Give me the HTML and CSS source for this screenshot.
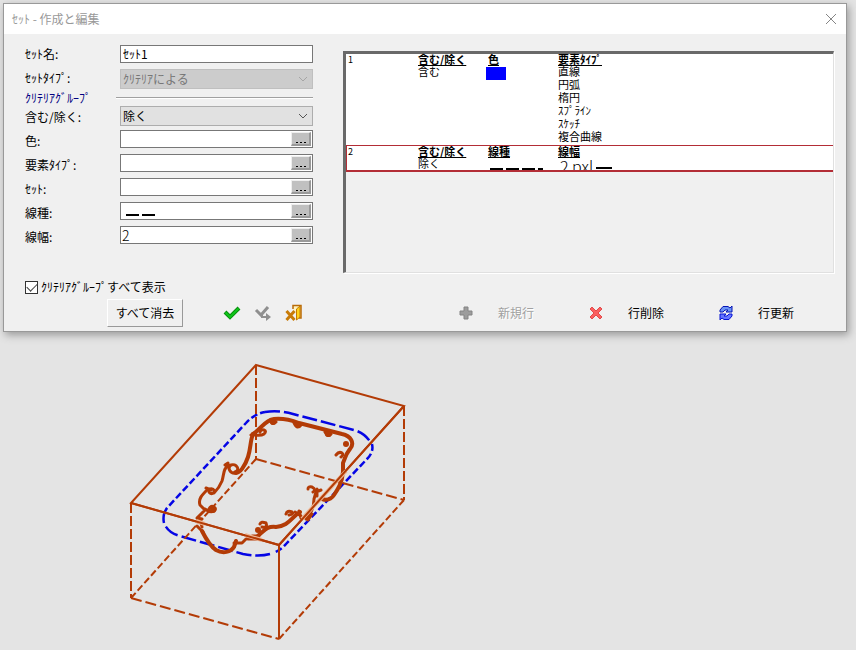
FILE: index.html
```html
<!DOCTYPE html>
<html lang="ja">
<head>
<meta charset="utf-8">
<title>ｾｯﾄ - 作成と編集</title>
<link rel="stylesheet" href="styles.css">
</head>
<body>
<section class="dialog">
  <header class="titlebar">
    <h1>ｾｯﾄ - 作成と編集</h1>
    <button class="close" aria-label="閉じる"><svg width="12" height="12" viewBox="0 0 12 12"><path d="M1 1L11 11M11 1L1 11" stroke="#858585" fill="none"/></svg></button>
  </header>
  <div class="content">
    <form class="criteria">
      <div class="row upper"><label for="name">ｾｯﾄ名:</label><div class="field"><input id="name" type="text" value="ｾｯﾄ1"></div></div>
      <div class="row upper"><label for="kind">ｾｯﾄﾀｲﾌﾟ:</label><div class="select disabled"><select id="kind" disabled><option>ｸﾘﾃﾘｱによる</option></select><svg width="10" height="6" viewBox="0 0 10 6"><path d="M1 1L5 5L9 1" stroke="#a5a5a5" fill="none"/></svg></div></div>
      <div class="group"><span>ｸﾘﾃﾘｱｸﾞﾙｰﾌﾟ</span><hr></div>
      <div class="row"><label for="mode">含む/除く:</label><div class="select"><select id="mode"><option>除く</option></select><svg width="10" height="6" viewBox="0 0 10 6"><path d="M1 1L5 5L9 1" stroke="#555" fill="none"/></svg></div></div>
      <div class="row"><label for="color">色:</label><div class="field"><input id="color" type="text"><button type="button" aria-label="色の選択"><i></i></button></div></div>
      <div class="row"><label for="element">要素ﾀｲﾌﾟ:</label><div class="field"><input id="element" type="text"><button type="button" aria-label="要素の選択"><i></i></button></div></div>
      <div class="row"><label for="set">ｾｯﾄ:</label><div class="field"><input id="set" type="text"><button type="button" aria-label="ｾｯﾄの選択"><i></i></button></div></div>
      <div class="row"><label for="style">線種:</label><div class="field"><svg class="dashes" width="36" height="16" viewBox="0 0 36 16"><path d="M5 12H18M21 12H34" stroke="#000" stroke-width="2"/></svg><input id="style" type="text"><button type="button" aria-label="線種の選択"><i></i></button></div></div>
      <div class="row"><label for="width">線幅:</label><div class="field"><input id="width" class="large" type="text" value="2"><button type="button" aria-label="線幅の選択"><i></i></button></div></div>
    </form>
    <div class="list">
      <table>
        <tbody>
          <tr>
            <td>1</td>
            <td><b>含む/除く</b><p>含む</p></td>
            <td><b>色</b><div class="swatch"></div></td>
            <td><b>要素ﾀｲﾌﾟ</b><p>直線</p><p>円弧</p><p>楕円</p><p>ｽﾌﾟﾗｲﾝ</p><p>ｽｹｯﾁ</p><p>複合曲線</p></td>
          </tr>
        </tbody>
      </table>
      <div class="selected">
        <table>
          <tbody>
            <tr>
              <td>2</td>
              <td><b>含む/除く</b><p>除く</p></td>
              <td><b>線種</b><svg width="60" height="13" viewBox="0 0 60 13"><path d="M2 12H15M18 12H31M34 12H47M50 12H55" stroke="#000" stroke-width="2"/></svg></td>
              <td><b>線幅</b><div class="pixels"><span>2 pxl</span><svg width="16" height="12" viewBox="0 0 16 12"><path d="M0 11H16" stroke="#000" stroke-width="2"/></svg></div></td>
            </tr>
          </tbody>
        </table>
      </div>
    </div>
  </div>
  <div class="show-all"><input id="all" type="checkbox" checked><label for="all">ｸﾘﾃﾘｱｸﾞﾙｰﾌﾟすべて表示</label></div>
  <footer>
    <div class="actions">
      <button class="clear">すべて消去</button>
      <button class="icon" aria-label="OK"><svg width="18" height="18" viewBox="0 0 18 18"><path d="M2 8L7 13L16 4" fill="none" stroke="#078f0b" stroke-width="4"/><path d="M2.500 8.500L7 13L15.500 4.500" fill="none" stroke="#10c51b" stroke-width="2"/></svg></button>
      <button class="icon" aria-label="適用"><svg width="18" height="18" viewBox="0 0 18 18"><path d="M2 6L7 11L14 3" fill="none" stroke="#8f8f8f" stroke-width="3"/><path d="M8 9V13H13" fill="none" stroke="#8f8f8f" stroke-width="2"/><path d="M12 9L17 13L12 17Z" fill="#8f8f8f"/></svg></button>
      <button class="icon" aria-label="終了"><svg width="18" height="18" viewBox="0 0 18 18"><path d="M8 5V1.500H16V14H14" fill="#fff3c0" stroke="#b96b08" stroke-width="1.500"/><path d="M11.500 5L15 2V13L11.500 16Z" fill="#ffd21a" stroke="#c57a00"/><path d="M1.500 7L9.500 16M9.500 7L1.500 16" stroke="#c87b08" stroke-width="3"/></svg></button>
    </div>
    <div class="line-tools">
      <button disabled><svg width="14" height="14" viewBox="0 0 14 14"><path d="M5 1H9V5H13V9H9V13H5V9H1V5H5Z" fill="#9c9c9c" stroke="#848484"/></svg><span>新規行</span></button>
      <button><svg width="14" height="14" viewBox="0 0 14 14"><path d="M3 1L7 5L11 1L13 3L9 7L13 11L11 13L7 9L3 13L1 11L5 7L1 3Z" fill="#fa6060" stroke="#e24b4b"/></svg><span>行削除</span></button>
      <button><svg width="14" height="16" viewBox="0 0 14 16"><path d="M1 7V5L4 1.500H9L11 3L13 1V7H7L9 5H6L4 7Z" fill="#6b94f5" stroke="#0714b4"/><path d="M13 9V11L10 14.500H5L3 13L1 15V9H7L5 11H8L10 9Z" fill="#6575ff" stroke="#0714d4"/></svg><span>行更新</span></button>
    </div>
  </footer>
</section>
<main class="viewport">
  <svg width="300" height="290" viewBox="120 355 300 290" role="img" aria-label="直方体と輪郭">
    <g class="offset">
      <path class="short" d="M164 514Q165 511 167 508L246 423Q254 414 265 412"/>
      <path d="M265 412Q279 410 293 414L354 430Q365 433 371 443"/>
      <path class="short" d="M372 444Q374 452 367 459L286 544Q281 550 273 553"/>
      <path d="M270 554Q259 557 243 554L180 536Q168 533 164 523Q163 519 164 514"/>
    </g>
    <g class="box">
      <path d="M256 365L404 406L279 545L131 503ZM279 545V639"/>
      <path class="hidden vertical" d="M256 365V459M404 406V500M131 503V598"/>
      <path class="hidden" d="M256 459L404 500M131 598L279 639"/>
      <path class="hidden short" d="M404 500L279 639M256 459L131 598"/>
    </g>
    <g class="contour">
      <path class="thick" d="M253 434C261 429 265 420 274 419C284 418 291 420 299 423L342 434C351 436 355 443 350 449C347 453 346 454 345 458L343 463V472C342 483 338 489 334 495C330 501 325 500 322 499"/>
      <path class="thick" d="M253 434C250 441 251 448 248 457C245 466 240 473 236 473"/>
      <path d="M236 473C230 474 227 468 231 465C236 463 241 470 235 472M251 435L256 432M225 465L228 463M229 465C223 468 224 475 222 481C220 486 217 490 214 493C210 495 207 491 210 489C214 488 217 493 212 493"/>
      <path d="M206 488L211 490M207 490C202 495 198 499 200 505L205 510L198 517V521L201 523L202 527"/>
      <path class="thick" d="M202 531C206 539 210 546 216 550C223 554 231 552 234 547L236 541"/>
      <path d="M197 526L203 532M234 543H242L246 539"/>
      <path class="thick" d="M248 538H256L260 534C265 530 267 526 276 527C287 526 290 520 296 515L300 512"/>
      <path d="M295 512L301 516M299 511L301 518"/>
      <path d="M314 499C314 509 310 514 306 519M308 520L312 514M314 499L316 492L321 490M317 489V496"/>
      <path d="M205 509Q210 513 214 511Q217 509 214 507Q211 505 209 509M197 518L202 519M248 539H257V536H252"/>
      <path d="M255 435Q261 436 264 434Q267 431 264 430Q261 429 260 432M270 420Q272 426 276 422M294 423Q297 430 301 425M325 432Q328 438 331 434M336 455Q339 451 342 453Q344 455 341 457M308 489Q308 486 312 487Q317 490 313 492M286 514Q287 510 292 512Q294 514 289 515M260 524Q261 521 266 523Q268 528 262 527"/>
      <g class="dots"><circle cx="346" cy="444" r="3"/><circle cx="258" cy="530" r="3"/><circle cx="273" cy="422" r="3"/><circle cx="298" cy="425" r="3"/><circle cx="328" cy="434" r="3"/><circle cx="213" cy="510" r="3"/></g>
    </g>
    <path class="highlight" d="M302 519L346 471M196 521L205 524M245 535L262 540"/>
    <path class="edge" d="M279 545L404 406M131 503L279 545"/>
  </svg>
</main>
</body>
</html>
```

FILE: styles.css
```css
* { box-sizing: border-box; }
body {
  margin: 0;
  padding: 3px 9px 0 3px;
  background: #e4e4e4;
  color: #000;
  font: 12px/16px "Noto Sans CJK JP", sans-serif;
}
button, input, select { font: inherit; color: inherit; }
button { padding: 0; border: 0; background: none; }
svg { display: block; flex: none; }
.dialog {
  border: 1px solid #999;
  background: #f0f0f0;
  box-shadow: 2px 3px 8px #999;
}
.titlebar {
  display: flex;
  align-items: center;
  justify-content: space-between;
  height: 30px;
  padding: 0 9px 0 8px;
  background: #fff;
}
h1 { margin: 0; font-size: 12px; font-weight: 400; color: #999; }
.content { display: flex; padding: 8px 12px 0 21px; }
.criteria { flex: none; width: 288px; margin-right: 30px; }
.row { display: flex; height: 24px; padding-top: 1px; }
.row.upper { padding-top: 3px; }
.row > label { width: 95px; line-height: 24px; margin-top: -1px; }
.row.upper > label { margin-top: -3px; }
.field {
  display: flex;
  flex: 1;
  min-width: 0;
  height: 18px;
  border: 1px solid #777;
  background: #fff;
}
.field input {
  flex: 1;
  min-width: 0;
  height: 16px;
  padding: 0 2px;
  border: 0;
  outline: 0;
  background: none;
}
.field .large { padding: 0 1px; font-size: 14px; font-weight: 300; }
.field button {
  display: flex;
  flex: none;
  align-items: flex-end;
  justify-content: center;
  width: 20px;
  height: 14px;
  margin: 1px;
  padding-bottom: 1px;
  border: 1px solid;
  border-width: 1px 2px 2px 1px;
  border-color: #eee #999 #999 #eee;
  background: #c0c0c0;
}
.field i { width: 10px; height: 1px; background: repeating-linear-gradient(90deg, #000 0 2px, transparent 2px 4px); }
.select {
  display: flex;
  align-items: center;
  flex: 1;
  height: 20px;
  padding-right: 4px;
  border: 1px solid #adadad;
  background: #e1e1e1;
}
.select select {
  flex: 1;
  appearance: none;
  height: 18px;
  padding: 0 2px;
  border: 0;
  background: none;
}
.disabled { border-color: #bfbfbf; background: #ccc; color: #777; }
.disabled select { opacity: 1; }
.group { display: flex; align-items: center; height: 15px; color: #000080; }
.group span { width: 91px; }
.group hr { flex: 1; height: 2px; margin: 0; border: 0; border-top: 1px solid #a0a0a0; border-bottom: 1px solid #fff; }
.list {
  flex: 1;
  min-height: 222px;
  margin-top: 9px;
  border: 1px solid;
  border-width: 3px 1px 1px 3px;
  border-color: #696969 #e0e0e0 #e0e0e0 #696969;
  box-shadow: 1px 1px #fff;
  font-size: 11px;
  line-height: 13px;
}
table { width: 100%; table-layout: fixed; border-collapse: collapse; background: #fff; }
td { width: 70px; padding: 0 2px; vertical-align: top; height: 91px; }
td:last-child { width: auto; }
td:first-child { font-size: 9px; line-height: 11px; }
b { display: block; text-decoration: underline; line-height: 11px; }
p { margin: 0; }
.swatch { width: 20px; height: 13px; margin: 2px 0 0 -2px; background: #00f; }
.selected { height: 27px; border: 1px solid #b32d36; border-width: 1px 0 2px 1px; overflow: hidden; }
.selected td { height: 24px; padding-left: 1px; }
.pixels { display: flex; font-size: 16px; line-height: 19px; font-weight: 300; padding-left: 2px; }
.pixels svg { margin-left: 3px; }
.show-all { display: flex; align-items: center; height: 18px; margin: 5px 0 0 21px; }
.show-all input {
  appearance: none;
  width: 13px;
  height: 13px;
  margin: 0 3px 0 0;
  border: 1px solid #333;
  background: #fff;
  display: grid;
  place-items: center;
}
.show-all input::before { content: ""; width: 9px; height: 5px; margin-top: -3px; border: solid #444; border-width: 0 0 1px 1px; transform: rotate(-45deg); }
footer { display: flex; justify-content: space-between; padding: 3px 52px 4px 103px; }
.actions { display: flex; align-items: center; }
.clear {
  width: 76px;
  height: 28px;
  border: 1px solid;
  border-color: #fff #999 #999 #fff;
}
.icon { margin-left: 13px; }
.clear + .icon { margin-left: 40px; }
.line-tools { display: flex; gap: 55px; }
.line-tools button { display: grid; grid-template-columns: 39px 36px; align-items: center; }
.line-tools button:disabled { color: #a0a0a0; text-shadow: 1px 1px #fff; }
.viewport { padding: 23px 0 0 117px; }
.box path, .edge { fill: none; stroke: #b33b06; stroke-width: 2; }
.box .hidden { stroke-dasharray: 11 4; }
.box .vertical { stroke-dasharray: 10 3; }
.box .short { stroke-dasharray: 7 3; }
.offset path { fill: none; stroke: #0505e5; stroke-width: 2.5; stroke-dasharray: 15 4; }
.offset .short { stroke-dasharray: 7 3; }
.contour path { fill: none; stroke: #b33b06; stroke-width: 3; stroke-linecap: round; stroke-linejoin: round; }
.contour .thick { stroke-width: 4; }
.dots { fill: #b33b06; }
.highlight { fill: none; stroke: #edb796; stroke-width: 4; }
```
